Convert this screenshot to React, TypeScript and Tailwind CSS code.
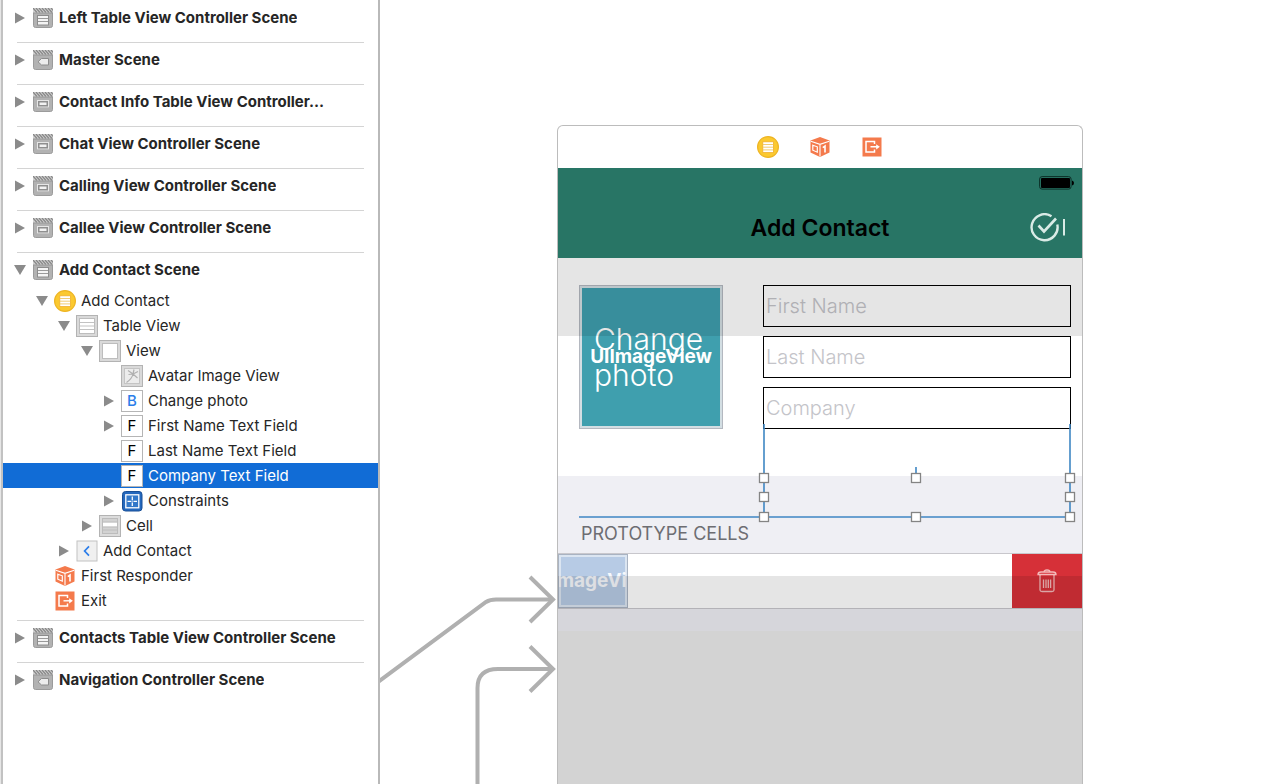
import React, { useState } from 'react';
import clsx from 'clsx';

type SceneKind = 'table' | 'nav' | 'view';
type NodeKind =
  | 'controller'
  | 'tableView'
  | 'view'
  | 'image'
  | 'button'
  | 'field'
  | 'constraints'
  | 'cell'
  | 'navItem'
  | 'responder'
  | 'exit';
type Disclosure = 'open' | 'closed' | 'none';

interface TreeNode {
  id: string;
  label: string;
  kind: NodeKind;
  depth: number;
  disclosure: Disclosure;
}

interface Scene {
  label: string;
  kind: SceneKind;
  nodes?: TreeNode[];
}

const addContactNodes: TreeNode[] = [
  { id: 'controller', label: 'Add Contact', kind: 'controller', depth: 0, disclosure: 'open' },
  { id: 'table', label: 'Table View', kind: 'tableView', depth: 1, disclosure: 'open' },
  { id: 'view', label: 'View', kind: 'view', depth: 2, disclosure: 'open' },
  { id: 'avatar', label: 'Avatar Image View', kind: 'image', depth: 3, disclosure: 'none' },
  { id: 'photo', label: 'Change photo', kind: 'button', depth: 3, disclosure: 'closed' },
  { id: 'first', label: 'First Name Text Field', kind: 'field', depth: 3, disclosure: 'closed' },
  { id: 'last', label: 'Last Name Text Field', kind: 'field', depth: 3, disclosure: 'none' },
  { id: 'company', label: 'Company Text Field', kind: 'field', depth: 3, disclosure: 'none' },
  { id: 'constraints', label: 'Constraints', kind: 'constraints', depth: 3, disclosure: 'closed' },
  { id: 'cell', label: 'Cell', kind: 'cell', depth: 2, disclosure: 'closed' },
  { id: 'navItem', label: 'Add Contact', kind: 'navItem', depth: 1, disclosure: 'closed' },
  { id: 'responder', label: 'First Responder', kind: 'responder', depth: 0, disclosure: 'none' },
  { id: 'exit', label: 'Exit', kind: 'exit', depth: 0, disclosure: 'none' },
];

const scenes: Scene[] = [
  { label: 'Left Table View Controller Scene', kind: 'table' },
  { label: 'Master Scene', kind: 'nav' },
  { label: 'Contact Info Table View Controller…', kind: 'view' },
  { label: 'Chat View Controller Scene', kind: 'view' },
  { label: 'Calling View Controller Scene', kind: 'view' },
  { label: 'Callee View Controller Scene', kind: 'view' },
  { label: 'Add Contact Scene', kind: 'table', nodes: addContactNodes },
  { label: 'Contacts Table View Controller Scene', kind: 'table' },
  { label: 'Navigation Controller Scene', kind: 'nav' },
];

const indent = ['pl-[33px]', 'pl-[55px]', 'pl-[78px]', 'pl-[100px]'];

const Triangle = ({ state }: { state: Disclosure }) => (
  <svg className="h-3 w-[13px] shrink-0" viewBox="0 0 13 12" fill="#8b8b8b" aria-hidden="true">
    {state === 'closed' && <path d="M1 0.5 L11 6 L1 11.5Z" />}
    {state === 'open' && <path d="M0 1 H12 L6 11Z" />}
  </svg>
);

const SceneIcon = ({ kind }: { kind: SceneKind }) => (
  <svg className="size-5 shrink-0" viewBox="0 0 20 20" aria-hidden="true">
    <path d="M0.5 0.5 H19.5 V17.5 Q19.5 19.5 17.5 19.5 H2.5 Q0.5 19.5 0.5 17.5Z" fill="#b2b2b2" stroke="#9b9b9b" />
    <rect x="0" y="0" width="20" height="5" fill="#d0d0d0" />
    <path
      d="M0 0 L4 4.5 M3 0 L7 4.5 M6 0 L10 4.5 M9 0 L13 4.5 M12 0 L16 4.5 M15 0 L19 4.5 M18 0 L20 2.5"
      stroke="#868686"
      strokeWidth="1.2"
    />
    <path d="M0 5 H20" stroke="#969696" />
    {kind === 'table' && (
      <>
        <rect x="4.5" y="7.5" width="11" height="9.5" fill="#f4f4f4" stroke="#8c8c8c" />
        <path d="M5 10.5 H15 M5 13.5 H15" stroke="#9a9a9a" />
      </>
    )}
    {kind === 'nav' && <path d="M5 11.8 L8.5 8.5 H15.5 V15 H8.5Z" fill="#ececec" stroke="#8c8c8c" />}
    {kind === 'view' && (
      <>
        <rect x="4" y="8" width="12" height="7.5" fill="#8f8f8f" />
        <rect x="4.5" y="8.5" width="11" height="6.5" fill="none" stroke="#e6e6e6" />
        <rect x="6.5" y="10.5" width="7" height="2.5" fill="#f2f2f2" />
      </>
    )}
  </svg>
);

const ControllerIcon = () => (
  <svg className="size-[22px] shrink-0" viewBox="0 0 22 22" aria-hidden="true">
    <circle cx="11" cy="11" r="10.4" fill="#fbc92f" stroke="#eeb422" strokeWidth="1.2" />
    <rect x="5.8" y="5.8" width="10.6" height="10.8" fill="#fff" stroke="#f0ae2c" strokeWidth="0.8" />
    <path d="M6 8.5 H16.2 M6 11.2 H16.2 M6 13.9 H16.2" stroke="#efc664" strokeWidth="0.9" />
  </svg>
);

const ResponderIcon = () => (
  <svg className="size-[22px] shrink-0" viewBox="0 0 22 22" aria-hidden="true">
    <path d="M11 1 L20.5 4.5 V16.5 L11 21 L1.5 16.5 V4.5Z" fill="#f47a4c" />
    <path d="M1.8 5.3 L11 8.3 L20.2 5.3 M11 8.3 V20.5" fill="none" stroke="#fff" strokeWidth="1.1" />
    <path d="M3.8 9.2 L8.3 10.8 V16.2 L3.8 14.2Z" fill="none" stroke="#fff" strokeWidth="1.2" />
    <path d="M13.8 11.6 L16 10 V16.6" fill="none" stroke="#fff" strokeWidth="1.6" />
  </svg>
);

const ExitIcon = () => (
  <svg className="size-[22px] shrink-0" viewBox="0 0 22 22" aria-hidden="true">
    <rect x="1.5" y="1.5" width="19" height="19" fill="#f47a4c" />
    <path d="M13.5 8 V5.5 H5 V16 H13.5 V13.5" fill="none" stroke="#fff" strokeWidth="1.5" />
    <path d="M9.5 10.8 H16" stroke="#fff" strokeWidth="1.4" />
    <path d="M15.2 8.2 L18.8 10.8 L15.2 13.4Z" fill="#fff" />
  </svg>
);

const LetterIcon = ({ letter, color }: { letter: string; color: string }) => (
  <span
    className={clsx(
      'flex size-[22px] shrink-0 items-center justify-center border border-[#b5b5b5] bg-white text-[15px] leading-none',
      color,
    )}
  >
    {letter}
  </span>
);

const NodeIcon = ({ kind }: { kind: NodeKind }) => {
  if (kind === 'controller') return <ControllerIcon />;
  if (kind === 'responder') return <ResponderIcon />;
  if (kind === 'exit') return <ExitIcon />;
  if (kind === 'button') return <LetterIcon letter="B" color="text-[#2b7de9] font-medium" />;
  if (kind === 'field') return <LetterIcon letter="F" color="text-black" />;
  return (
    <svg className="size-[22px] shrink-0" viewBox="0 0 22 22" aria-hidden="true">
      {kind === 'tableView' && (
        <>
          <rect x="0.5" y="0.5" width="21" height="21" fill="#d9d9d9" stroke="#b3b3b3" />
          <rect x="3.5" y="3.5" width="15" height="15" fill="#fff" stroke="#bdbdbd" />
          <path d="M4 7.5 H18 M4 11 H18 M4 14.5 H18" stroke="#c2c2c2" />
        </>
      )}
      {kind === 'view' && (
        <>
          <rect x="0.5" y="0.5" width="21" height="21" fill="#d9d9d9" stroke="#b3b3b3" />
          <rect x="3.5" y="3.5" width="15" height="15" fill="#fff" stroke="#bdbdbd" />
        </>
      )}
      {kind === 'image' && (
        <>
          <rect x="0.5" y="0.5" width="21" height="21" fill="#d9d9d9" stroke="#b3b3b3" />
          <rect x="3.5" y="3.5" width="15" height="15" fill="#ececec" stroke="#c4c4c4" />
          <path
            d="M12 9 L7 5.5 M12 9 L7.5 9.5 M12 9 L13 4.5 M12 9 L17 6.5 M12 9 L16.5 13 M12 9 C11.5 12 9 15 5.5 17.5"
            stroke="#b0b0b0"
            strokeWidth="1.2"
            fill="none"
          />
        </>
      )}
      {kind === 'constraints' && (
        <>
          <rect x="1.5" y="1.5" width="19.5" height="19.5" rx="3" fill="#2468bd" stroke="#184f96" />
          <rect x="4.8" y="4.8" width="13" height="13" fill="#3177c9" stroke="#fff" strokeWidth="1.3" />
          <path d="M11.3 6.5 V10 M11.3 12.6 V16 M6.5 11.3 H10 M12.6 11.3 H16" stroke="#fff" strokeWidth="1.3" />
          <path d="M10 11.3 H12.6 M11.3 10 V12.6" stroke="#a9c8ee" strokeWidth="0.8" />
        </>
      )}
      {kind === 'cell' && (
        <>
          <rect x="0.5" y="0.5" width="21" height="21" fill="#dcdcdc" stroke="#b3b3b3" />
          <rect x="3.5" y="3.5" width="15" height="15" fill="#d2d2d2" stroke="#bcbcbc" />
          <rect x="4" y="7.5" width="14" height="4" fill="#fff" />
          <path d="M4 7 H18 M4 12 H18 M4 15 H18" stroke="#b8b8b8" strokeWidth="0.8" />
        </>
      )}
      {kind === 'navItem' && (
        <>
          <rect x="1" y="1" width="20" height="20" fill="#f0f0f0" stroke="#c2c2c2" />
          <path d="M13 6.3 L8.6 11 L13 15.7" fill="none" stroke="#2b7de9" strokeWidth="1.7" />
        </>
      )}
    </svg>
  );
};

interface OutlineProps {
  selected: string;
  onSelect: (id: string) => void;
}

const Outline: React.FC<OutlineProps> = ({ selected, onSelect }) => (
  <nav className="w-[377px] shrink-0 overflow-hidden border-r-2 border-[#b9b9b9] bg-white pt-px text-[15px] leading-5 text-[#262626]">
    <ul>
      {scenes.map((scene) => (
        <li key={scene.label}>
          <button type="button" className="mt-[5px] flex h-6 w-full items-center gap-1.5 pl-[11px] text-left font-bold">
            <Triangle state={scene.nodes ? 'open' : 'closed'} />
            <SceneIcon kind={scene.kind} />
            <span className="truncate">{scene.label}</span>
          </button>
          {scene.nodes && (
            <ul className="mt-1.5">
              {scene.nodes.map((node) => (
                <li key={node.id}>
                  <button
                    type="button"
                    onClick={() => onSelect(node.id)}
                    className={clsx(
                      'flex h-[25px] w-full items-center gap-[5px] text-left',
                      indent[node.depth],
                      selected === node.id && 'bg-[#116cd6] text-white',
                    )}
                  >
                    <Triangle state={node.disclosure} />
                    <NodeIcon kind={node.kind} />
                    <span className="truncate">{node.label}</span>
                  </button>
                </li>
              ))}
            </ul>
          )}
          {scene.label !== 'Navigation Controller Scene' && (
            <hr className={clsx('mx-3.5 border-[#d4d4d4]', scene.nodes ? 'mt-[7px]' : 'mt-3')} />
          )}
        </li>
      ))}
    </ul>
  </nav>
);

const Segues = () => (
  <svg
    className="absolute inset-y-0 left-0 h-full w-[177px]"
    fill="none"
    stroke="#b0b0b0"
    strokeWidth="4"
    aria-hidden="true"
  >
    <path d="M-2 682 L106 602 Q110 599.5 116 599.5 H172" />
    <path d="M150 577 L173 599.5 L150 622" />
    <path d="M97.5 2000 V688 Q97.5 669 118 669 H172" />
    <path d="M150 646.5 L173 669 L150 691.5" />
  </svg>
);

// Handles sit on the frame of the selected field, lines are its constraints
const handles = [
  [206, 220], [358, 220], [512, 220],
  [206, 239], [512, 239],
  [206, 259], [358, 259], [512, 259],
];

const SelectionFrame = () => (
  <svg className="pointer-events-none absolute left-0 top-0 h-[296px] w-[524px]" aria-hidden="true">
    <path d="M206 166 V259 M512 166 V259 M21 259 H512 M358 209 V216" stroke="#3f87c4" strokeWidth="1.6" />
    {handles.map(([x, y]) => (
      <rect key={`${x}-${y}`} x={x - 4.5} y={y - 4.5} width="9" height="9" fill="#fff" stroke="#848484" strokeWidth="1.3" />
    ))}
  </svg>
);

const fields = [
  { id: 'first-name', label: 'First Name' },
  { id: 'last-name', label: 'Last Name' },
  { id: 'company', label: 'Company' },
];

const Device: React.FC = () => (
  <section className="mt-[125px] ml-[177px] flex w-[526px] shrink-0 flex-col overflow-hidden rounded-t-md border border-b-0 border-[#bcbcbc] bg-white">
    <div className="flex h-[42px] shrink-0 items-center justify-center gap-[30px]">
      <ControllerIcon />
      <ResponderIcon />
      <ExitIcon />
    </div>

    <header className="shrink-0 bg-[#287565]">
      <div className="flex h-[30px] items-center justify-end px-2">
        <svg className="h-3.5 w-[35px]" viewBox="0 0 35 14" aria-hidden="true">
          <rect x="0.6" y="0.6" width="31.5" height="12.5" rx="2.5" fill="none" stroke="#0c2f27" strokeWidth="1" />
          <rect x="2" y="2" width="29" height="10" rx="1" fill="#000" />
          <path d="M33 4.5 Q35 5 35 7 Q35 9 33 9.5Z" fill="#000" />
        </svg>
      </div>
      <div className="grid h-[60px] grid-cols-[1fr_auto_1fr] items-center px-4">
        <h1 className="col-start-2 text-[23px] font-semibold text-black">Add Contact</h1>
        <button type="button" aria-label="Save contact" className="justify-self-end">
          <svg className="h-[30px] w-9" viewBox="0 0 36 30" fill="none" stroke="#d9ebe6" aria-hidden="true">
            <path d="M21.5 3.2 A13 13 0 1 0 27.3 11.5" strokeWidth="2.4" />
            <path d="M8.5 12.5 L14 18.5 L26 5.5" strokeWidth="2.6" />
            <path d="M34 6 V22.5" strokeWidth="2" />
          </svg>
        </button>
      </div>
    </header>

    <div className="relative shrink-0">
      <form className="flex h-[218px] items-start gap-10 bg-white pt-[27px] pr-[11px] pl-[21px]">
        <button
          type="button"
          className="relative flex size-36 shrink-0 items-center border border-[#b4b8c0] bg-[#3f9fae] p-3.5 text-left text-3xl leading-9 font-light text-white ring-2 ring-[#d3dee3] ring-inset"
        >
          Change
          <br />
          photo
          <span className="absolute inset-0 flex items-center justify-center text-[19px] font-bold">UIImageView</span>
        </button>
        <div className="flex flex-1 flex-col gap-[9px]">
          {fields.map((field) => (
            <input
              key={field.id}
              id={field.id}
              type="text"
              aria-label={field.label}
              placeholder={field.label}
              className="h-[42px] w-full border border-black px-[2px] text-xl font-light text-black placeholder:text-[#c4c4c9]"
            />
          ))}
        </div>
      </form>
      <div className="pointer-events-none absolute inset-x-0 top-0 h-[78px] bg-black/10" />
      <div className="flex h-[77px] items-end bg-[#efeff4] px-[23px] pb-[5px]">
        <h2 className="text-lg text-[#6d6d72]">PROTOTYPE CELLS</h2>
      </div>
      <SelectionFrame />
    </div>

    <div className="relative flex flex-1 flex-col bg-[#ebebeb]">
      <div className="flex h-14 shrink-0 border-y border-[#c8c7cc] bg-white">
        <div className="flex w-[70px] items-center justify-center overflow-hidden border border-[#a9b3c2] bg-[#b7cbe5] text-[19px] font-bold text-[#f6f9fd] ring-2 ring-[#dbe5f1] ring-inset">
          UIImageView
        </div>
        <button type="button" aria-label="Delete" className="ml-auto flex w-[70px] items-center justify-center bg-[#d63038]">
          <svg className="h-6 w-5" viewBox="0 0 20 24" fill="none" stroke="#f3b9b9" strokeWidth="1.3" aria-hidden="true">
            <path d="M1 5.5 Q1 3 4 3 H16 Q19 3 19 5.5Z M7 3 Q7 1 10 1 Q13 1 13 3" />
            <path d="M3 6 V21 Q3 22.5 5 22.5 H15 Q17 22.5 17 21 V6" />
            <path d="M6.5 10.5 V19 M9 10.5 V19 M11.3 10.5 V19 M13.6 10.5 V19" />
          </svg>
        </button>
      </div>
      <div className="h-[22px] shrink-0 bg-[#efeff4]" />
      <div className="pointer-events-none absolute inset-x-0 top-[23px] bottom-0 bg-black/10" />
    </div>
  </section>
);

const App: React.FC = () => {
  const [selected, setSelected] = useState('company');

  return (
    <div className="flex h-screen overflow-hidden bg-white font-['Inter','Liberation_Sans',sans-serif]">
      <div className="w-[3px] shrink-0 border-r-2 border-[#c2c2c2] bg-[#e6e6e6]" />
      <Outline selected={selected} onSelect={setSelected} />
      <main className="relative flex min-w-0 flex-1 overflow-hidden">
        <Segues />
        <Device />
      </main>
    </div>
  );
};

export default App;
